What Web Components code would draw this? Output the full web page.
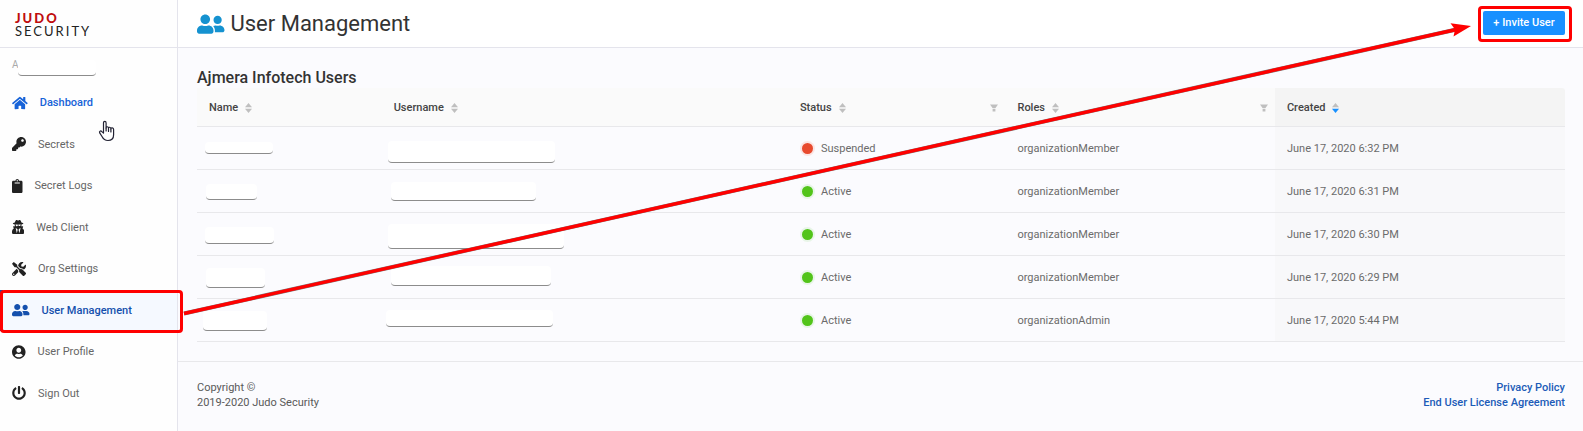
<!DOCTYPE html>
<html lang="en">
<head>
<meta charset="utf-8">
<title>User Management</title>
<style>
  body { margin: 0; font-family: Roboto, "Liberation Sans", sans-serif; font-size: 11px; line-height: 15px; color: #595959; background: #fbfbfe; }
</style>
</head>
<body>
<judo-app></judo-app>
<script>
const ICONS = {
  home: [576, 'M280.37 148.26L96 300.11V464a16 16 0 0 0 16 16l112.06-.29a16 16 0 0 0 15.92-16V368a16 16 0 0 1 16-16h64a16 16 0 0 1 16 16v95.64a16 16 0 0 0 16 16.05L464 480a16 16 0 0 0 16-16V300L295.67 148.26a12.19 12.19 0 0 0-15.3 0zM571.6 251.47L488 182.56V44.05a12 12 0 0 0-12-12h-56a12 12 0 0 0-12 12v72.61L318.47 43a48 48 0 0 0-61 0L4.34 251.47a12 12 0 0 0-1.6 16.9l25.5 31A12 12 0 0 0 45.15 301l235.22-193.74a12.19 12.19 0 0 1 15.3 0L530.9 301a12 12 0 0 0 16.9-1.6l25.5-31a12 12 0 0 0-1.7-16.93z'],
  key: [512, 'M512 176.001C512 273.203 433.202 352 336 352c-11.22 0-22.19-1.062-32.827-3.069l-24.012 27.014A23.999 23.999 0 0 1 261.223 384H224v40c0 13.255-10.745 24-24 24h-40v40c0 13.255-10.745 24-24 24H24c-13.255 0-24-10.745-24-24v-78.059c0-6.365 2.529-12.47 7.029-16.971l161.802-161.802C163.108 213.814 160 195.271 160 176 160 78.798 238.797.001 335.999 0 433.488-.001 512 78.511 512 176.001zM336 128c0 26.51 21.49 48 48 48s48-21.49 48-48-21.49-48-48-48-48 21.49-48 48z'],
  clipboard: [384, 'M384 112v352c0 26.51-21.49 48-48 48H48c-26.51 0-48-21.49-48-48V112c0-26.51 21.49-48 48-48h80c0-35.29 28.71-64 64-64s64 28.71 64 64h80c26.51 0 48 21.49 48 48zM192 40c-13.255 0-24 10.745-24 24s10.745 24 24 24 24-10.745 24-24-10.745-24-24-24m96 114v-20a6 6 0 0 0-6-6H102a6 6 0 0 0-6 6v20a6 6 0 0 0 6 6h180a6 6 0 0 0 6-6z'],
  secret: [448, 'M383.9 308.3l23.9-62.6c4-10.5-3.7-21.7-15-21.7h-58.5c11-18.9 17.8-40.6 17.8-64v-.3c39.2-7.8 64-19.1 64-31.7 0-13.3-27.3-25.1-70.1-33-9.2-32.8-27-65.8-40.6-82.8-9.5-11.9-25.9-15.6-39.5-8.8l-27.6 13.8c-9 4.5-19.6 4.5-28.6 0L182.1 3.4c-13.6-6.8-30-3.1-39.5 8.8-13.5 17-31.4 50-40.6 82.8-42.7 7.9-70 19.7-70 33 0 12.6 24.8 23.9 64 31.7v.3c0 23.4 6.8 45.1 17.8 64H56.3c-11.5 0-19.2 11.7-14.7 22.3l25.8 60.2C27.3 329.8 0 372.7 0 422.4v44.8C0 491.9 20.1 512 44.8 512h358.4c24.7 0 44.8-20.1 44.8-44.8v-44.8c0-48.4-25.8-90.4-64.1-114.1zM176 480l-41.6-192 49.6 32 24 40-32 120zm96 0l-32-120 24-40 49.6-32L272 480zm41.7-298.5c-3.9 11.9-7 24.6-16.5 33.4-10.1 9.3-48 22.4-64-25-2.8-8.4-15.4-8.4-18.3 0-17 50.2-56 32.4-64 25-9.5-8.8-12.7-21.5-16.5-33.4-.8-2.5-6.3-5.7-6.3-5.8v-10.8c28.3 3.6 61 5.8 96 5.8s67.7-2.1 96-5.8v10.8c-.1.1-5.6 3.2-6.4 5.8z'],
  tools: [512, 'M501.1 395.7L384 278.6c-23.1-23.1-57.6-27.6-85.4-13.9L192 158.1V96L64 0 0 64l96 128h62.1l106.6 106.6c-13.6 27.8-9.2 62.3 13.9 85.4l117.1 117.1c14.6 14.6 38.2 14.6 52.7 0l52.7-52.7c14.5-14.6 14.5-38.2 0-52.7zM331.7 225c28.3 0 54.9 11 74.9 31l19.4 19.4c15.8-6.9 30.8-16.5 43.8-29.5 37.1-37.1 49.7-89.3 37.9-136.7-2.2-9-13.5-12.1-20.1-5.5l-74.4 74.4-67.9-11.3L334 98.9l74.4-74.4c6.6-6.6 3.4-17.9-5.7-20.2-47.4-11.7-99.6.9-136.6 37.9-28.5 28.5-41.9 66.1-41.2 103.6l82.1 82.1c8.1-1.9 16.5-2.9 24.7-2.9zm-103.9 82l-56.7-56.7L18.7 402.8c-25 25-25 65.5 0 90.5s65.5 25 90.5 0l123.6-123.6c-7.6-19.9-9.9-41.6-5-62.7zM64 472c-13.2 0-24-10.8-24-24 0-13.3 10.7-24 24-24s24 10.7 24 24c0 13.2-10.7 24-24 24z'],
  users: [640, 'M192 256c61.9 0 112-50.1 112-112S253.9 32 192 32 80 82.1 80 144s50.1 112 112 112zm76.8 32h-8.3c-20.8 10-43.9 16-68.5 16s-47.6-6-68.5-16h-8.3C51.6 288 0 339.6 0 403.2V432c0 26.5 21.5 48 48 48h288c26.5 0 48-21.5 48-48v-28.8c0-63.6-51.6-115.2-115.2-115.2zM480 256c53 0 96-43 96-96s-43-96-96-96-96 43-96 96 43 96 96 96zm48 32h-3.8c-13.9 4.8-28.6 8-44.2 8s-30.3-3.2-44.2-8H432c-20.4 0-39.2 5.9-55.7 15.4 24.4 26.3 39.7 61.2 39.7 99.8v38.4c0 2.2-.5 4.3-.6 6.4H592c26.5 0 48-21.5 48-48 0-61.9-50.1-112-112-112z'],
  profile: [496, 'M248 8C111 8 0 119 0 256s111 248 248 248 248-111 248-248S385 8 248 8zm0 96c48.6 0 88 39.4 88 88s-39.4 88-88 88-88-39.4-88-88 39.4-88 88-88zm0 344c-58.7 0-111.3-26.6-146.5-68.2 18.8-35.4 55.6-59.8 98.5-59.8 2.4 0 4.8.4 7.1 1.1 13 4.2 26.6 6.9 40.9 6.9 14.3 0 28-2.7 40.9-6.9 2.3-.7 4.7-1.1 7.1-1.1 42.9 0 79.7 24.4 98.5 59.8C359.3 421.4 306.7 448 248 448z'],
  power: [512, 'M400 54.1c63 45 104 118.6 104 201.9 0 136.8-110.8 247.7-247.5 248C120 504.3 8.2 393 8 256.4 7.9 173.1 48.9 99.3 111.8 54.2c11.7-8.3 28-4.8 35 7.7L162.6 90c5.9 10.5 3.1 23.8-6.6 31-41.5 30.8-68 79.6-68 134.9-.1 92.3 74.5 168.1 168 168.1 91.6 0 168.6-74.2 168-169.1-.3-51.8-24.7-101.8-68.1-134-9.7-7.2-12.4-20.5-6.5-30.9l15.8-28.1c7-12.4 23.2-16.1 34.8-7.8zM296 264V24c0-13.3-10.7-24-24-24h-32c-13.3 0-24 10.7-24 24v240c0 13.3 10.7 24 24 24h32c13.3 0 24-10.7 24-24z']
};

class JudoElement extends HTMLElement {
  connectedCallback() {
    if (this.shadowRoot) return;
    this.attachShadow({ mode: 'open' }).innerHTML = this.render();
  }
}

customElements.define('judo-icon', class extends JudoElement {
  render() {
    const [w, d] = ICONS[this.getAttribute('name')];
    return `<style>:host{display:block;flex:none} svg{display:block;height:var(--icon-size,14px);fill:currentColor}</style>
      <svg viewBox="0 0 ${w} 512" aria-hidden="true"><path d="${d}"/></svg>`;
  }
});

customElements.define('judo-logo', class extends JudoElement {
  render() {
    return `<style>
      :host{display:flex;align-items:center;box-sizing:border-box;height:48px;padding:3px 0 0 15px;border-bottom:1px solid #e4e4ec;font:400 13px/13px Lato,sans-serif;letter-spacing:2px;color:#222}
      b{display:block;font-weight:900;color:#c00d0d}
      span{display:block}
    </style><div><b>JUDO</b><span>SECURITY</span></div>`;
  }
});

/* White patch laid over a private value; x and y are relative to its container. */
customElements.define('privacy-patch', class extends JudoElement {
  render() {
    const [x, y, w, h] = this.getAttribute('box').split(' ');
    return `<style>:host{position:absolute;left:${x}px;top:${y}px;width:${w}px;height:${h}px;box-sizing:border-box;background:#fff;border-bottom:1px solid #8c8c8c;border-radius:4px}</style>`;
  }
});

customElements.define('nav-item', class extends JudoElement {
  render() {
    return `<style>
      :host{display:grid;position:relative;color:#666}
      a{display:flex;align-items:center;gap:12px;padding-left:12px;color:inherit;text-decoration:none}
      judo-icon{color:#222}
      :host([hovered]),:host([hovered]) judo-icon{color:#1763d8}
      :host([current]),:host([current]) judo-icon{color:#1450ad}
      :host([current]){background:#f5f9ff;box-shadow:inset 3px 0 #1450ad}
      :host([current])::after{content:"";position:absolute;inset:0 -6px -2px 0;border:3px solid #f00;border-radius:4px;z-index:2}
      :host([current]),:host([hovered]){font-weight:500}
    </style><a href="#"><judo-icon name="${this.getAttribute('icon')}"></judo-icon><slot></slot></a>`;
  }
});

customElements.define('side-bar', class extends JudoElement {
  render() {
    return `<style>
      :host{display:block;position:relative;background:#fefefe;border-right:1px solid #e4e4ec}
      .org{position:relative;height:34px;padding-left:12px;font-size:10px;line-height:34px;color:#aaa;box-sizing:border-box}
      nav{display:grid;grid-auto-rows:1fr;min-height:332px}
      .hand{position:absolute;left:98px;top:120px;width:18px;height:22px}
    </style>
    <judo-logo></judo-logo>
    <div class="org">A<privacy-patch box="18 12 78 16"></privacy-patch></div>
    <nav>
      <nav-item icon="home" hovered>Dashboard</nav-item>
      <nav-item icon="key">Secrets</nav-item>
      <nav-item icon="clipboard">Secret Logs</nav-item>
      <nav-item icon="secret">Web Client</nav-item>
      <nav-item icon="tools">Org Settings</nav-item>
      <nav-item icon="users" current>User Management</nav-item>
      <nav-item icon="profile">User Profile</nav-item>
      <nav-item icon="power">Sign Out</nav-item>
    </nav>
    <svg class="hand" viewBox="0 0 18 22" fill="#fff" stroke="#223" stroke-width="1.2" stroke-linejoin="round" stroke-linecap="round" aria-hidden="true">
      <path d="M5.500 13V3c0-2.300 2.600-2.300 2.600 0v5c0-1.700 2.400-1.700 2.400.3 0-1.500 2.400-1.400 2.400.5 0-1.400 2.700-1.200 2.700.8v5.200c0 3.600-2.300 5.700-5.600 5.700-3.400 0-4.800-1.600-6-4L1.700 12.900c-.8-1.600 1-2.600 2.100-1.300z"/>
      <path d="M8.100 8v3M10.500 8.500v3M12.900 9v3" fill="none"/>
    </svg>`;
  }
});

customElements.define('page-header', class extends JudoElement {
  render() {
    return `<style>
      :host{display:flex;align-items:center;justify-content:space-between;box-sizing:border-box;height:48px;padding:0 18px 0 19px;background:#fff;border-bottom:1px solid #e4e4ec}
      h1{display:flex;align-items:center;gap:6px;margin:0;font-size:22px;line-height:32px;font-weight:400;color:#333}
      judo-icon{--icon-size:22px;color:#1592d0}
      .call{position:relative;margin-bottom:2px}
      .call::after{content:"";position:absolute;inset:-5px -7px -7px -5px;border:3px solid #f00;border-radius:4px;pointer-events:none}
      button{display:block;width:82px;height:24px;padding:0;border:0;border-radius:2px;background:#1890ff;color:#fff;font:500 11px/24px Roboto,sans-serif}
    </style>
    <h1><judo-icon name="users"></judo-icon>User Management</h1>
    <div class="call"><button type="button">+ Invite User</button></div>`;
  }
});

customElements.define('column-title', class extends JudoElement {
  render() {
    const down = this.hasAttribute('descending') ? '#1890ff' : '#bfbfbf';
    const funnel = this.hasAttribute('filter') ? '<svg class="f" width="8" height="8" viewBox="0 0 8 8" aria-hidden="true"><path d="M0 0.500h8L5.500 4H2.500zM2.600 4.700h2.800V7.500H2.600z" fill="#bfbfbf"/></svg>' : '';
    return `<style>:host{display:flex;align-items:center;gap:7px} svg{display:block;margin-top:1px} .f{margin-left:auto;margin-right:-5px}</style>
      <slot></slot><svg width="7" height="10" viewBox="0 0 7 10" aria-hidden="true"><path d="M0 4.200L3.500 0 7 4.200z" fill="#bfbfbf"/><path d="M0 5.800h7L3.500 10z" fill="${down}"/></svg>${funnel}`;
  }
});

customElements.define('status-mark', class extends JudoElement {
  render() {
    return `<style>
      :host{display:flex;align-items:center;gap:6px;--dot:#52c41a;--halo:#e8f5e8}
      :host([suspended]){--dot:#e84a2e;--halo:#fbe5e4}
      i{width:11px;height:11px;margin:0 2px;border-radius:50%;background:var(--dot);box-shadow:0 0 0 2px var(--halo)}
    </style><i></i><slot></slot>`;
  }
});

const USERS = [
  ['8 15 68 12', '6 14 167 22', 'Suspended', 'organizationMember', 'June 17, 2020 6:32 PM'],
  ['9 14 51 16', '9 12 145 19', 'Active', 'organizationMember', 'June 17, 2020 6:31 PM'],
  ['8 14 69 17', '6 11 176 25', 'Active', 'organizationMember', 'June 17, 2020 6:30 PM'],
  ['9 12 59 20', '9 10 160 20', 'Active', 'organizationMember', 'June 17, 2020 6:29 PM'],
  ['6 12 64 20', '4 11 167 17', 'Active', 'organizationAdmin', 'June 17, 2020 5:44 PM']
];

customElements.define('user-table', class extends JudoElement {
  render() {
    const rows = USERS.map(([n, u, s, r, c]) => `<tr>
      <td><privacy-patch box="${n}"></privacy-patch></td><td><privacy-patch box="${u}"></privacy-patch></td>
      <td><status-mark ${s === 'Suspended' ? 'suspended' : ''}>${s}</status-mark></td><td>${r}</td><td>${c}</td></tr>`).join('');
    return `<style>
      :host{display:block}
      table{width:100%;table-layout:fixed;border-collapse:separate;border-spacing:0}
      th,td{position:relative;box-sizing:border-box;padding:0 12px;border-bottom:1px solid #e8e8eb;text-align:left}
      th{height:39px;background:#fafafa;font-weight:500;color:#444}
      td{height:43px;color:#6b6b6b}
      th:last-child{background:#f4f4f4;border-top-right-radius:3px} td:last-child{background:#f8f8fa}
      .n{width:13.5%}.u{width:29.7%}.s{width:15.9%}.r{width:19.7%}
    </style>
    <table><colgroup><col class="n"><col class="u"><col class="s"><col class="r"><col></colgroup>
      <thead><tr><th><column-title>Name</column-title></th><th><column-title>Username</column-title></th><th><column-title filter>Status</column-title></th><th><column-title filter>Roles</column-title></th><th><column-title descending>Created</column-title></th></tr></thead>
      <tbody>${rows}</tbody></table>`;
  }
});

customElements.define('page-footer', class extends JudoElement {
  render() {
    return `<style>
      :host{display:flex;justify-content:space-between;padding:18px 18px 0 19px;border-top:1px solid #e8e8eb}
      p{margin:0} div{text-align:right;font-weight:500}
      a{display:block;color:#1c5bb8;text-decoration:none}
    </style><p>Copyright ©<br>2019-2020 Judo Security</p>
    <div><a href="#">Privacy Policy</a><a href="#">End User License Agreement</a></div>`;
  }
});

/* Arrow from the current menu entry to the invite button. */
customElements.define('guide-arrow', class extends JudoElement {
  render() {
    return `<style>:host{position:absolute;inset:0;pointer-events:none;z-index:3;overflow:hidden} svg{display:block;width:100%;height:100%;overflow:visible}</style>
    <svg aria-hidden="true"><line x1="184" y1="313.500" x2="92%" y2="29.500" stroke="#777" stroke-width="4"/><line x1="184" y1="313.500" x2="92%" y2="29.500" stroke="#f00" stroke-width="3.400"/>
      <svg x="100%" overflow="visible"><path d="M-112 26L-132.500 23.200-128 29.400-129.500 36.500z" fill="#f00"/></svg></svg>`;
  }
});

customElements.define('judo-app', class extends JudoElement {
  render() {
    return `<style>
      :host{display:grid;position:relative;grid-template-columns:178px minmax(0,1fr);min-height:100vh}
      section{padding:20px 18px 19px 19px}
      h2{margin:0 0 1px;font-size:16px;line-height:19px;font-weight:500;color:#333}
    </style>
    <side-bar></side-bar>
    <main><page-header></page-header><section><h2>Ajmera Infotech Users</h2><user-table></user-table></section><page-footer></page-footer></main>
    <guide-arrow></guide-arrow>`;
  }
});
</script>
</body>
</html>
